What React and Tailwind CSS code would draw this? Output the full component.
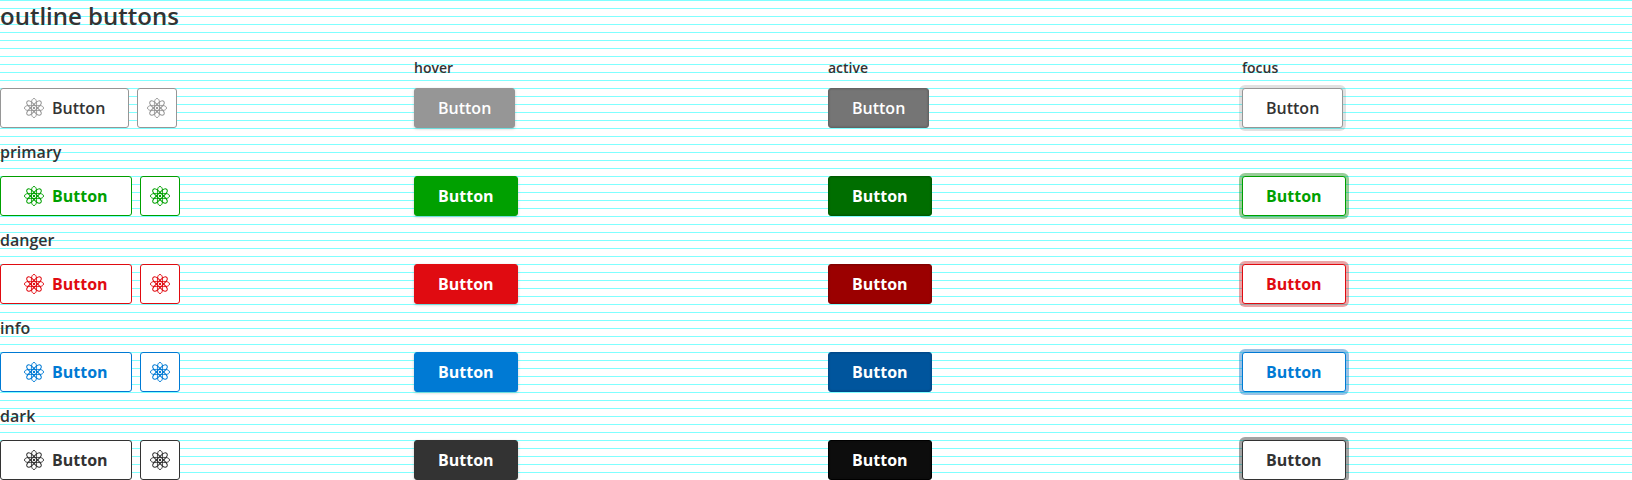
import React from "react";

const variants = [
  {
    name: "",
    weight: "font-semibold",
    base: "border-[#969696] bg-white text-[#333]",
    icon: "text-[#969696]",
    hover: "border-[#969696] bg-[#969696]",
    active: "border-[#646464] bg-[#757575]",
    ring: "shadow-[0_0_0_3px_rgba(51,51,51,0.15)]",
  },
  {
    name: "primary",
    weight: "font-bold",
    base: "border-[#00a000] bg-white text-[#00a000]",
    icon: "",
    hover: "border-[#00a000] bg-[#00a000]",
    active: "border-[#005a00] bg-[#006e00]",
    ring: "shadow-[0_0_0_3px_rgba(0,130,0,0.4)]",
  },
  {
    name: "danger",
    weight: "font-bold",
    base: "border-[#e00b11] bg-white text-[#e00b11]",
    icon: "",
    hover: "border-[#e00b11] bg-[#e00b11]",
    active: "border-[#820000] bg-[#9b0000]",
    ring: "shadow-[0_0_0_3px_rgba(200,10,15,0.37)]",
  },
  {
    name: "info",
    weight: "font-bold",
    base: "border-[#007ad4] bg-white text-[#007ad4]",
    icon: "",
    hover: "border-[#007ad4] bg-[#007ad4]",
    active: "border-[#00488a] bg-[#00559d]",
    ring: "shadow-[0_0_0_3px_rgba(0,100,190,0.4)]",
  },
  {
    name: "dark",
    weight: "font-bold",
    base: "border-[#333] bg-white text-[#333]",
    icon: "",
    hover: "border-[#333] bg-[#333]",
    active: "border-black bg-[#0d0d0d]",
    ring: "shadow-[0_0_0_3px_rgba(26,26,26,0.4)]",
  },
];

const columns = ["", "hover", "active", "focus"];

function Flower({ className = "" }) {
  return (
    <svg viewBox="0 0 20 20" className={`size-5 shrink-0 ${className}`} fill="none" stroke="currentColor">
      {[0, 45, 90, 135].map((angle) => (
        <path
          key={angle}
          transform={`rotate(${angle} 10 10)`}
          d="M10 .5C8.6 .5 7.7 2 7.5 4.2C7.4 6 7.4 14 7.5 15.8C7.7 18 8.6 19.5 10 19.5S12.3 18 12.5 15.8C12.6 14 12.6 6 12.5 4.2C12.3 2 11.4 .5 10 .5Z"
        />
      ))}
      <circle cx="10" cy="10" r="1.2" fill="currentColor" stroke="none" />
    </svg>
  );
}

function Button({ className, children }) {
  return (
    <button className={`flex h-10 items-center gap-2 rounded-[3px] border text-base leading-6 ${className}`}>
      {children}
    </button>
  );
}

function Row({ variant: v }) {
  return (
    <div className="grid h-10 grid-cols-[414px_414px_414px_390px]">
      <div className="flex gap-2">
        <Button className={`px-[23px] ${v.weight} ${v.base}`}>
          <Flower className={v.icon} />
          Button
        </Button>
        <Button className={`w-10 justify-center ${v.base}`}>
          <Flower className={v.icon} />
        </Button>
      </div>
      <div className="flex">
        <Button className={`px-[23px] text-white shadow-[0_1px_3px_rgba(0,0,0,0.2)] ${v.weight} ${v.hover}`}>Button</Button>
      </div>
      <div className="flex">
        <Button className={`px-[23px] text-white shadow-[inset_0_0_2px_rgba(0,0,0,0.25)] ${v.weight} ${v.active}`}>Button</Button>
      </div>
      <div className="flex">
        <Button className={`px-[23px] ${v.weight} ${v.base} ${v.ring}`}>Button</Button>
      </div>
    </div>
  );
}

export default function App() {
  return (
    <main className="h-[480px] w-[1632px] overflow-hidden bg-white bg-[linear-gradient(to_bottom,#80ffff_1px,transparent_1px)] bg-[length:100%_8px] font-['Open_Sans',sans-serif] text-[#333]">
      <h2 className="h-14 text-2xl font-semibold leading-8">outline buttons</h2>
      <div className="grid h-8 grid-cols-[414px_414px_414px_390px] text-sm font-semibold leading-6">
        {columns.map((label, i) => (
          <span key={i}>{label}</span>
        ))}
      </div>
      {variants.map((v) => (
        <section key={v.name}>
          {v.name && <h3 className="h-12 pt-3 text-base font-semibold leading-6">{v.name}</h3>}
          <Row variant={v} />
        </section>
      ))}
    </main>
  );
}
